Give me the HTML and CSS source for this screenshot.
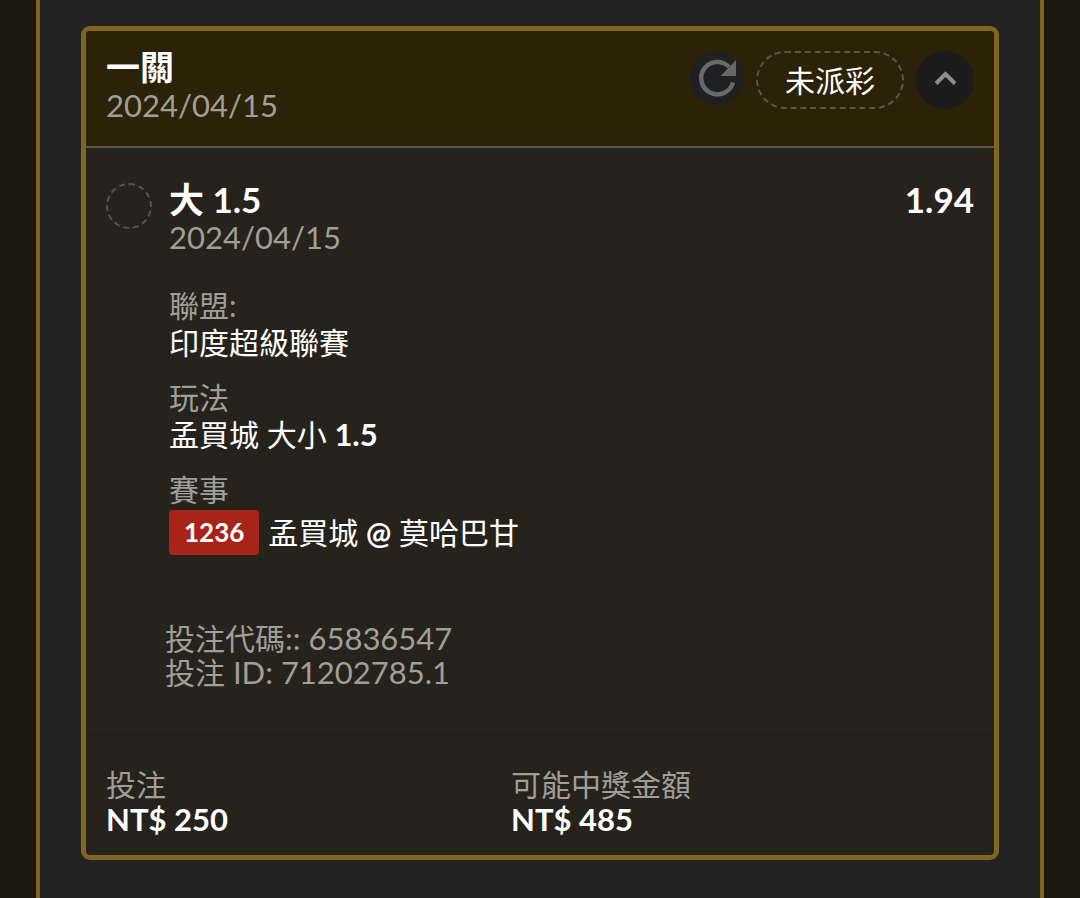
FILE: index.html
```html
<!DOCTYPE html>
<html lang="zh-Hant">
<head>
    <meta charset="UTF-8">
    <meta name="viewport" content="width=device-width, initial-scale=1.0">
    <title>投注紀錄</title>
    <link rel="stylesheet" href="styles.css">
</head>
<body>
    <main class="panel">
        <article class="bet-card">
            <header class="bet-header">
                <div class="bet-heading">
                    <h1>一關</h1>
                    <p class="date">2024/04/15</p>
                </div>
                <div class="bet-actions">
                    <button type="button" class="btn-refresh" aria-label="重新整理">
                        <svg viewBox="0 0 54 54" width="54" height="54">
                            <path d="M43 31.500 A16.2 16.2 0 1 1 39 15.8" fill="none" stroke="#696969" stroke-width="4.5"/>
                            <path d="M46 9 V25 H30.500 Z" fill="#696969"/>
                        </svg>
                    </button>
                    <span class="status">未派彩</span>
                    <button type="button" class="btn-toggle" aria-label="收合" aria-expanded="true">
                        <svg viewBox="0 0 24 20" width="24" height="20">
                            <path d="M3 13.500 L12.500 4 L22 13.500" fill="none" stroke="#8c8c8c" stroke-width="4"/>
                        </svg>
                    </button>
                </div>
            </header>

            <section class="selection">
                <span class="result-mark"></span>
                <div class="selection-body">
                    <div class="selection-head">
                        <div>
                            <h2>大 1.5</h2>
                            <p class="date">2024/04/15</p>
                        </div>
                        <strong class="odds">1.94</strong>
                    </div>
                    <dl class="details">
                        <div>
                            <dt>聯盟:</dt>
                            <dd>印度超級聯賽</dd>
                        </div>
                        <div>
                            <dt>玩法</dt>
                            <dd>孟買城 大小 <b>1.5</b></dd>
                        </div>
                        <div>
                            <dt>賽事</dt>
                            <dd class="match">
                                <span class="badge">1236</span>
                                <span>孟買城 <span class="at">@</span> 莫哈巴甘</span>
                            </dd>
                        </div>
                    </dl>
                </div>
            </section>

            <section class="codes">
                <p>投注代碼<span class="num">:: 65836547</span></p>
                <p>投注<span class="num"> ID: 71202785.1</span></p>
            </section>

            <footer class="totals">
                <div>
                    <p class="label">投注</p>
                    <p class="amount">NT$ 250</p>
                </div>
                <div>
                    <p class="label">可能中獎金額</p>
                    <p class="amount">NT$ 485</p>
                </div>
            </footer>
        </article>
    </main>
</body>
</html>
```
FILE: styles.css
```css
* {
    box-sizing: border-box;
}
body {
    margin: 0;
    padding: 0 36px;
    background: #1b1810;
    color: #fff;
    font-family: Lato, "Noto Sans CJK TC", sans-serif;
    font-size: 30px;
}
h1, h2, p, dl, dd {
    margin: 0;
}
button {
    border: none;
    padding: 0;
    border-radius: 50%;
    display: flex;
    align-items: center;
    justify-content: center;
    cursor: pointer;
}
.panel {
    min-height: 100vh;
    padding: 26px 41px;
    background: #232323;
    border: solid #836522;
    border-width: 0 4px;
}
.bet-card {
    border: 5px solid #836522;
    border-radius: 9px;
    background: #26231c;
    overflow: hidden;
}

/* header */
.bet-header {
    display: flex;
    justify-content: space-between;
    padding: 17px 20px 20px;
    background: #2c2207;
    border-bottom: 2px solid #5d564c;
}
h1 {
    font-size: 34px;
    line-height: 38px;
    font-weight: 700;
}
.date {
    color: #a09e99;
    font-size: 31px;
    line-height: 38px;
    padding-bottom: 2px;
}
.bet-actions {
    display: flex;
    gap: 12px;
    padding-top: 3px;
}
.btn-refresh {
    width: 54px;
    height: 54px;
    background: #1e2022;
}
.status {
    height: 58px;
    padding: 0 27px;
    border: 2px dashed #5c564c;
    border-radius: 29px;
    line-height: 54px;
}
.btn-toggle {
    width: 58px;
    height: 58px;
    background: #1c1c1c;
}

/* selection */
.selection {
    display: flex;
    gap: 17px;
    padding: 32px 20px 0;
}
.result-mark {
    flex: none;
    width: 46px;
    height: 46px;
    margin-top: 3px;
    border: 2px dashed #56534d;
    border-radius: 50%;
}
.selection-body {
    flex: 1;
    padding-bottom: 36px;
    border-bottom: 2px solid #29261f;
}
.selection-head {
    display: flex;
    justify-content: space-between;
    margin-bottom: 29px;
}
h2, .odds {
    font-size: 35px;
    line-height: 38px;
    font-weight: 700;
}
.details {
    display: grid;
    gap: 18px;
    line-height: 37px;
}
dt, .label {
    color: #a09e99;
}
dd b {
    font-size: 31px;
}
.match {
    display: flex;
    align-items: center;
    gap: 9px;
    margin-top: 2px;
}
.at {
    font-weight: 700;
}
.badge {
    padding: 4px 15px;
    border-radius: 4px;
    background: #a82318;
    font-size: 26px;
    font-weight: 700;
}

/* bet codes */
.codes {
    padding: 28px 20px 40px 79px;
    border-bottom: 2px solid #29261f;
    color: #a09e99;
    line-height: 34px;
}
.num {
    font-size: 31px;
}

/* totals */
.totals {
    display: grid;
    grid-template-columns: 1fr 1fr;
    padding: 36px 78px 18px 20px;
    line-height: 34px;
}
.amount {
    font-size: 31px;
    font-weight: 700;
    line-height: 36px;
}
```
